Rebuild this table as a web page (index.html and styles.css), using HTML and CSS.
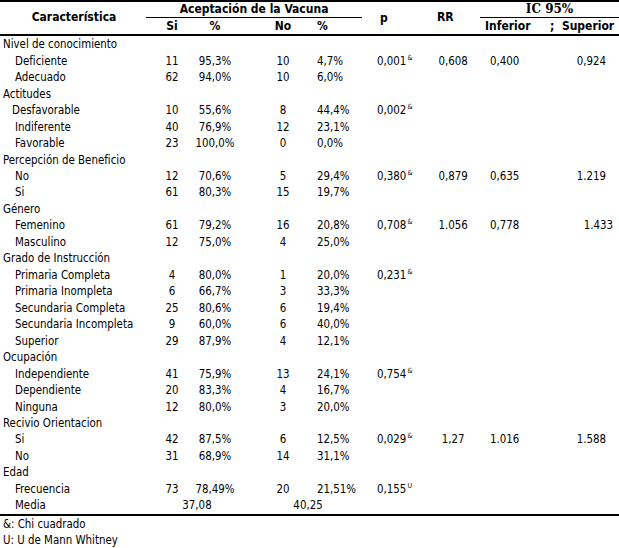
FILE: index.html
```html
<!DOCTYPE html>
<html lang="es">
<head>
<meta charset="utf-8">
<link rel="stylesheet" href="styles.css">
</head>
<body>
<table class="tbl">
  <colgroup>
    <col class="w-label"><col class="w-si"><col class="w-pct"><col class="w-no"><col class="w-pct2"><col class="w-p"><col class="w-rr"><col class="w-inf"><col class="w-sup">
  </colgroup>
  <thead>
    <tr class="h1">
      <th rowspan="2" class="h-mid h-car">Característica</th>
      <th colspan="4" class="h-group"><div class="ul ul-acc">Aceptación de la Vacuna</div></th>
      <th rowspan="2" class="h-mid h-p">p</th>
      <th rowspan="2" class="h-mid h-rr">RR</th>
      <th colspan="2" class="h-group"><div class="ul ul-ic">IC 95%</div></th>
    </tr>
    <tr class="h2">
      <th class="c-si">Si</th>
      <th class="c-pct">%</th>
      <th class="c-no">No</th>
      <th class="c-pct2 h-pct2">%</th>
      <th class="c-inf h-inf">Inferior</th>
      <th class="h-sup">;&nbsp; Superior</th>
    </tr>
  </thead>
  <tbody>
    <tr><td class="cat">Nivel de conocimiento</td><td></td><td></td><td></td><td></td><td></td><td></td><td></td><td></td></tr>
    <tr><td class="sub">Deficiente</td><td class="c-si">11</td><td class="c-pct">95,3%</td><td class="c-no">10</td><td class="c-pct2">4,7%</td><td class="c-p">0,001<span class="sup">&amp;</span></td><td class="c-rr">0,608</td><td class="c-inf">0,400</td><td class="c-sup">0,924</td></tr>
    <tr><td class="sub">Adecuado</td><td class="c-si">62</td><td class="c-pct">94,0%</td><td class="c-no">10</td><td class="c-pct2">6,0%</td><td></td><td></td><td></td><td></td></tr>
    <tr><td class="cat">Actitudes</td><td></td><td></td><td></td><td></td><td></td><td></td><td></td><td></td></tr>
    <tr><td class="sub sub-s">Desfavorable</td><td class="c-si">10</td><td class="c-pct">55,6%</td><td class="c-no">8</td><td class="c-pct2">44,4%</td><td class="c-p">0,002<span class="sup">&amp;</span></td><td></td><td></td><td></td></tr>
    <tr><td class="sub">Indiferente</td><td class="c-si">40</td><td class="c-pct">76,9%</td><td class="c-no">12</td><td class="c-pct2">23,1%</td><td></td><td></td><td></td><td></td></tr>
    <tr><td class="sub">Favorable</td><td class="c-si">23</td><td class="c-pct">100,0%</td><td class="c-no">0</td><td class="c-pct2">0,0%</td><td></td><td></td><td></td><td></td></tr>
    <tr><td class="cat">Percepción de Beneficio</td><td></td><td></td><td></td><td></td><td></td><td></td><td></td><td></td></tr>
    <tr><td class="sub">No</td><td class="c-si">12</td><td class="c-pct">70,6%</td><td class="c-no">5</td><td class="c-pct2">29,4%</td><td class="c-p">0,380<span class="sup">&amp;</span></td><td class="c-rr">0,879</td><td class="c-inf">0,635</td><td class="c-sup">1.219</td></tr>
    <tr><td class="sub">Si</td><td class="c-si">61</td><td class="c-pct">80,3%</td><td class="c-no">15</td><td class="c-pct2">19,7%</td><td></td><td></td><td></td><td></td></tr>
    <tr><td class="cat">Género</td><td></td><td></td><td></td><td></td><td></td><td></td><td></td><td></td></tr>
    <tr><td class="sub">Femenino</td><td class="c-si">61</td><td class="c-pct">79,2%</td><td class="c-no">16</td><td class="c-pct2">20,8%</td><td class="c-p">0,708<span class="sup">&amp;</span></td><td class="c-rr">1.056</td><td class="c-inf">0,778</td><td class="c-sup c-sup-r">1.433</td></tr>
    <tr><td class="sub">Masculino</td><td class="c-si">12</td><td class="c-pct">75,0%</td><td class="c-no">4</td><td class="c-pct2">25,0%</td><td></td><td></td><td></td><td></td></tr>
    <tr><td class="cat">Grado de Instrucción</td><td></td><td></td><td></td><td></td><td></td><td></td><td></td><td></td></tr>
    <tr><td class="sub">Primaria Completa</td><td class="c-si">4</td><td class="c-pct">80,0%</td><td class="c-no">1</td><td class="c-pct2">20,0%</td><td class="c-p">0,231<span class="sup">&amp;</span></td><td></td><td></td><td></td></tr>
    <tr><td class="sub">Primaria Inompleta</td><td class="c-si">6</td><td class="c-pct">66,7%</td><td class="c-no">3</td><td class="c-pct2">33,3%</td><td></td><td></td><td></td><td></td></tr>
    <tr><td class="sub">Secundaria Completa</td><td class="c-si">25</td><td class="c-pct">80,6%</td><td class="c-no">6</td><td class="c-pct2">19,4%</td><td></td><td></td><td></td><td></td></tr>
    <tr><td class="sub">Secundaria Incompleta</td><td class="c-si">9</td><td class="c-pct">60,0%</td><td class="c-no">6</td><td class="c-pct2">40,0%</td><td></td><td></td><td></td><td></td></tr>
    <tr><td class="sub">Superior</td><td class="c-si">29</td><td class="c-pct">87,9%</td><td class="c-no">4</td><td class="c-pct2">12,1%</td><td></td><td></td><td></td><td></td></tr>
    <tr><td class="cat">Ocupación</td><td></td><td></td><td></td><td></td><td></td><td></td><td></td><td></td></tr>
    <tr><td class="sub">Independiente</td><td class="c-si">41</td><td class="c-pct">75,9%</td><td class="c-no">13</td><td class="c-pct2">24,1%</td><td class="c-p">0,754<span class="sup">&amp;</span></td><td></td><td></td><td></td></tr>
    <tr><td class="sub">Dependiente</td><td class="c-si">20</td><td class="c-pct">83,3%</td><td class="c-no">4</td><td class="c-pct2">16,7%</td><td></td><td></td><td></td><td></td></tr>
    <tr><td class="sub">Ninguna</td><td class="c-si">12</td><td class="c-pct">80,0%</td><td class="c-no">3</td><td class="c-pct2">20,0%</td><td></td><td></td><td></td><td></td></tr>
    <tr><td class="cat">Recivio Orientacion</td><td></td><td></td><td></td><td></td><td></td><td></td><td></td><td></td></tr>
    <tr><td class="sub">Si</td><td class="c-si">42</td><td class="c-pct">87,5%</td><td class="c-no">6</td><td class="c-pct2">12,5%</td><td class="c-p">0,029<span class="sup">&amp;</span></td><td class="c-rr">1,27</td><td class="c-inf">1.016</td><td class="c-sup">1.588</td></tr>
    <tr><td class="sub">No</td><td class="c-si">31</td><td class="c-pct">68,9%</td><td class="c-no">14</td><td class="c-pct2">31,1%</td><td></td><td></td><td></td><td></td></tr>
    <tr><td class="cat">Edad</td><td></td><td></td><td></td><td></td><td></td><td></td><td></td><td></td></tr>
    <tr><td class="sub">Frecuencia</td><td class="c-si">73</td><td class="c-pct">78,49%</td><td class="c-no">20</td><td class="c-pct2">21,51%</td><td class="c-p">0,155<span class="sup">U</span></td><td></td><td></td><td></td></tr>
    <tr class="last"><td class="sub">Media</td><td colspan="2" class="c-media1">37,08</td><td colspan="2" class="c-media2">40,25</td><td></td><td></td><td></td><td></td></tr>
  </tbody>
</table>
<div class="notes">
  <p>&amp;: Chi cuadrado</p>
  <p>U: U de Mann Whitney</p>
</div>
</body>
</html>
```

FILE: styles.css
```css
html, body {
  margin: 0;
  padding: 0;
  background: #fff;
}

body {
  font-family: "DejaVu Sans Condensed", "DejaVu Sans", sans-serif;
  font-size: 11.4px;
  color: #000;
}

.tbl {
  width: 619px;
  border-collapse: collapse;
  table-layout: fixed;
  border-top: 2px solid #000;
  border-bottom: 2px solid #000;
}

.w-label { width: 150px; }
.w-si { width: 44px; }
.w-pct { width: 56px; }
.w-no { width: 66px; }
.w-pct2 { width: 54px; }
.w-p { width: 60px; }
.w-rr { width: 46px; }
.w-inf { width: 72px; }
.w-sup { width: 71px; }

th, td {
  padding: 0;
  white-space: nowrap;
  overflow: visible;
}

th {
  font-weight: bold;
  font-size: 12px;
  text-align: center;
}

thead tr.h1 th { height: 15px; line-height: 14px; vertical-align: bottom; }
thead tr.h2 th { height: 16px; line-height: 16px; border-bottom: 2px solid #000; }
thead tr.h1 th.h-mid { vertical-align: middle; border-bottom: 2px solid #000; padding-bottom: 2px; }
thead tr.h1 th.h-car { padding-right: 2px; }
thead tr.h1 th.h-p { text-align: left; padding-left: 10px; padding-bottom: 0; }
thead tr.h1 th.h-rr { text-align: left; padding-left: 7px; }

.ul { border-bottom: 1px solid #000; padding-bottom: 1px; }
.ul-acc { margin-left: -4px; margin-right: 8px; }
.ul-ic { margin-left: 4px; font-family: "DejaVu Serif", "Liberation Serif", serif; font-size: 12px; }

th.h-pct2 { text-align: left; padding-left: 1px; }
th.h-inf { text-align: left; padding-left: 9px; }
th.h-sup { text-align: left; padding-left: 2px; }

tbody td { height: 16.48px; line-height: 16px; vertical-align: middle; }

td.cat { padding-left: 3px; }
td.sub { padding-left: 15px; }
td.sub-s { padding-left: 12px; }

.c-si { text-align: center; }
.c-pct { text-align: center; padding-right: 14px; }
.c-no { text-align: center; }
.c-pct2 { text-align: left; padding-left: 1px; }
.c-p { text-align: left; padding-left: 7px; }
.c-rr { text-align: center; }
.c-inf { text-align: left; padding-left: 14px; }
.c-sup { text-align: right; padding-right: 13px; }
.c-sup-r { padding-right: 6px; }

.c-media1 { text-align: center; padding-right: 6px; }
.c-media2 { text-align: center; padding-right: 4px; }

.sup {
  font-size: 7px;
  vertical-align: 5px;
  line-height: 0;
  margin-left: 1px;
}

.notes p {
  margin: 0;
  padding-left: 3px;
  height: 16px;
  line-height: 16px;
}
```
